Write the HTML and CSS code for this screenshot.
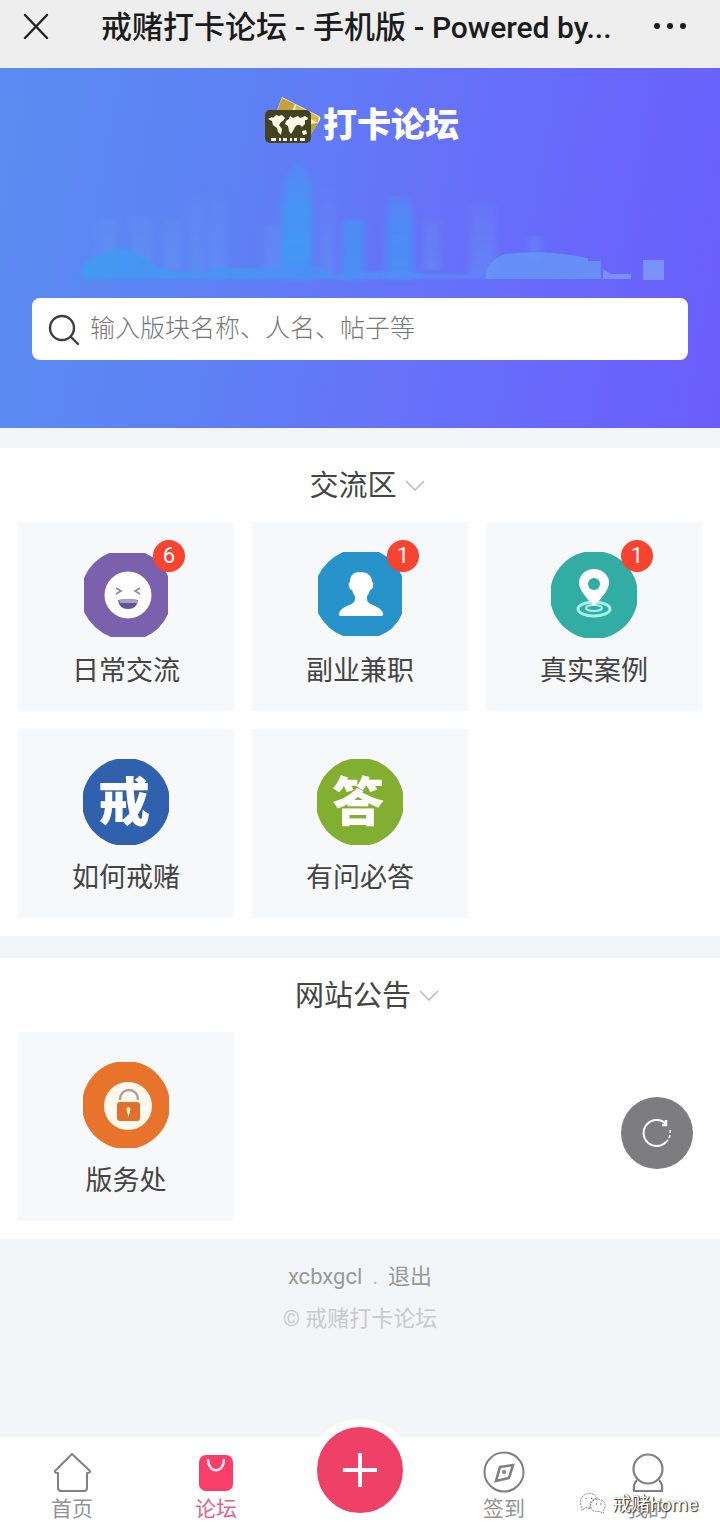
FILE: index.html
```html
<!DOCTYPE html>
<html lang="zh-CN">
<head>
<meta charset="utf-8">
<meta name="viewport" content="width=device-width, initial-scale=1">
<title>戒赌打卡论坛 - 手机版</title>
<link rel="stylesheet" href="styles.css">
</head>
<body>
<header class="topbar">
  <button class="icon-button" aria-label="关闭">
    <svg width="28" height="28" viewBox="0 0 28 28" fill="none" stroke="#222" stroke-width="2.4" stroke-linecap="round"><path d="M3 2 25 25M25 2 3 25"/></svg>
  </button>
  <h1 class="topbar-title">戒赌打卡论坛 - 手机版 - <span class="topbar-latin">Powered by...</span></h1>
  <button class="icon-button" aria-label="更多">
    <svg width="36" height="10" viewBox="0 0 36 10" fill="#1c1c1c"><circle cx="5" cy="4" r="3"/><circle cx="18" cy="4" r="3"/><circle cx="31" cy="4" r="3"/></svg>
  </button>
</header>

<main class="page">
  <section class="hero">
    <div class="brand">
      <svg width="56" height="48" viewBox="0 0 56 48">
        <path d="M17 1 54 20q2 1 1 4L44 41 8 25Z" fill="#f5efd0"/>
        <path d="M17 2 30 8 27 15 12 15Z" fill="#c3a43b"/>
        <path d="M31 9 54 21 53 27 30 14Z" fill="#d4b94e"/>
        <path d="M45 28 53 27 45 40Z" fill="#c3a43b"/>
        <rect x="0" y="14" width="46" height="33" rx="5" fill="#45431f"/>
        <g fill="#fffbe6">
          <path d="M3 23 7 21 8 22 11 19 14 20 17 19 20 22 18 25 16 26 14 29 17 33 16 39 13 36 12 32 8 29 7 25Z"/>
          <path d="M21 25 24 23 25 20 28 22 33 20 35 22 40 20 43 22 42 24 40 24 40 28 37 31 35 29 32 29 30 31 28 35 26 38 24 35 23 30 20 28Z"/>
          <path d="M37 35 41 34 42 38 38 39Z"/>
          <path d="M6 42h5v3H6zM14 42h2v3h-2zM18 42h4v3h-4zM25 42h2v3h-2zM29 42h3v3h-3zM35 42h5v3h-5z"/>
        </g>
      </svg>
      <span class="brand-name">打卡论坛</span>
    </div>
    <svg class="skyline" viewBox="0 0 720 142" aria-hidden="true">
      <defs>
        <linearGradient id="tower" x1="0" y1="0" x2="0" y2="1"><stop offset="0" stop-color="#4696f6" stop-opacity=".45"/><stop offset=".4" stop-color="#4495f5" stop-opacity=".95"/><stop offset="1" stop-color="#4495f5"/></linearGradient>
        <linearGradient id="pale" x1="0" y1="0" x2="0" y2="1"><stop offset="0" stop-color="#6d99f4" stop-opacity="0"/><stop offset="1" stop-color="#5f96f3" stop-opacity=".5"/></linearGradient>
        <linearGradient id="shore" x1="0" y1="0" x2="1" y2="0"><stop offset="0" stop-color="#4399f2"/><stop offset=".6" stop-color="#4d8ef7"/><stop offset="1" stop-color="#5c8bf8" stop-opacity=".6"/></linearGradient>
        <filter id="haze" x="-5%" y="-5%" width="110%" height="110%"><feGaussianBlur stdDeviation="3 1"/></filter>
      </defs>
      <g filter="url(#haze)">
        <path d="M98 76h20v50H98zM130 72h22v50h-22zM164 76h16v50h-16zM190 50h14v78h-14zM208 36h18v92h-18zM264 80h16v50h-16zM320 44h14v90h-14zM424 76h16v50h-16zM470 60h26v70h-26zM528 92h14v24h-14z" fill="url(#pale)"/>
        <path d="M281 64l5-30 8-14h8l8 14 2 24v78h-31z" fill="url(#tower)"/>
        <path d="M344 76h20v60h-22zM388 62l2-10h18l4 12 2 72h-28z" fill="url(#tower)" opacity=".75"/>
        <path d="M80 130q4-14 20-20l22-6 20 6 16 14 24 4h28v-4h60l44-2 20 8h18v-2h50l44 2h52v5H82Z" fill="url(#shore)"/>
      </g>
      <path d="M486 130q4-16 20-20 40-5 82 4v3h13v18H486Z" fill="#659bf3" opacity=".75"/>
      <path d="M603 125l8 5h20v5h-28zM643 116h21v20h-21z" fill="#7a91fa"/>
    </svg>
    <form class="search" role="search">
      <svg width="32" height="32" viewBox="0 0 32 32" fill="none" stroke="#3d3d3d" stroke-width="2.4" stroke-linecap="round"><circle cx="14" cy="14" r="12"/><path d="M23 23 30 30"/></svg>
      <input class="search-input" type="search" aria-label="搜索" placeholder="输入版块名称、人名、帖子等">
    </form>
  </section>

  <section class="block">
    <h2 class="block-title"><button class="block-toggle">交流区
      <svg width="20" height="12" viewBox="0 0 20 12" fill="none" stroke="#b5b5b5" stroke-width="1.3"><path d="M1 1 10 10 19 1"/></svg></button></h2>
    <div class="grid">
      <a class="card" href="#">
        <span class="card-icon">
          <svg class="card-svg" viewBox="0 0 86 86">
            <path d="M26 1H62Q78 8 85 24V62Q78 78 62 85H28Q10 78 1 60V26Q9 8 26 1Z" fill="#7a60ad"/>
            <circle cx="45" cy="43" r="23.500" fill="#fff"/>
            <path d="M33 36 38 39 33 42M57 36 52 39 57 42" fill="none" stroke="#8d86a3" stroke-width="1.600"/>
            <path d="M35 48q10-2 20 0-1 9-10 9t-10-9Z" fill="#66519b"/><path d="M36 48q9-2 18 0v3H37Z" fill="#aaa0cc"/>
          </svg>
          <span class="badge">6</span>
        </span>
        <span class="card-label">日常交流</span>
      </a>
      <a class="card" href="#">
        <span class="card-icon">
          <svg class="card-svg" viewBox="0 0 86 86">
            <path d="M26 0H62Q78 8 85 24V62Q78 78 62 84H26Q9 77 1 61V24Q9 8 26 0Z" fill="#2892cb"/>
            <path d="M43 20c-7 0-10 4-10 10q-2 0-1 4 0 3 3 4 1 4 3 6v3q0 4-6 6-8 3-10 8-1 3 2 3h40q3 0 2-3-2-5-10-8-6-2-6-6v-3q2-2 3-6 3-1 3-4 1-4-1-4c0-6-4-10-12-10Z" fill="#fff"/>
          </svg>
          <span class="badge">1</span>
        </span>
        <span class="card-label">副业兼职</span>
      </a>
      <a class="card" href="#">
        <span class="card-icon">
          <svg class="card-svg" viewBox="0 0 86 86">
            <circle cx="43" cy="43" r="44" fill="#31ada4"/>
            <ellipse cx="43" cy="57" rx="16" ry="7" fill="none" stroke="#a9f0eb" stroke-width="3"/>
            <ellipse cx="43" cy="56" rx="8" ry="3" fill="none" stroke="#a9f0eb" stroke-width="2"/>
            <path d="M43 54Q28 39 28 31a15 14 0 0 1 30 0q0 8-15 23Z" fill="#fff"/>
            <circle cx="43" cy="32" r="6" fill="#31ada4"/>
          </svg>
          <span class="badge">1</span>
        </span>
        <span class="card-label">真实案例</span>
      </a>
      <a class="card" href="#">
        <span class="card-icon">
          <svg class="card-svg" viewBox="0 0 86 86"><circle cx="43" cy="43" r="44" fill="#3061ae"/><text class="seal" x="41" y="62" text-anchor="middle">戒</text></svg>
        </span>
        <span class="card-label">如何戒赌</span>
      </a>
      <a class="card" href="#">
        <span class="card-icon">
          <svg class="card-svg" viewBox="0 0 86 86"><circle cx="43" cy="43" r="44" fill="#82af2f"/><text class="seal" x="41" y="62" text-anchor="middle">答</text></svg>
        </span>
        <span class="card-label">有问必答</span>
      </a>
    </div>
  </section>

  <section class="block">
    <h2 class="block-title"><button class="block-toggle">网站公告
      <svg width="20" height="12" viewBox="0 0 20 12" fill="none" stroke="#b5b5b5" stroke-width="1.3"><path d="M1 1 10 10 19 1"/></svg></button></h2>
    <div class="grid">
      <a class="card" href="#">
        <span class="card-icon">
          <svg class="card-svg" viewBox="0 0 86 86">
            <circle cx="43" cy="43" r="44" fill="#e8742b"/>
            <circle cx="45" cy="44" r="24" fill="#fff8ec"/>
            <path d="M37 38v-1a9 9 0 0 1 18 0v1" fill="none" stroke="#b0a092" stroke-width="2.400"/>
            <rect x="34" y="40" width="23" height="19" rx="3" fill="#e2702d"/>
            <path d="M45.500 45a2.500 2.500 0 0 1 1.500 4l-1.500 6-1.500-6a2.500 2.500 0 0 1 1.500-4Z" fill="#fff0d8"/>
          </svg>
        </span>
        <span class="card-label">版务处</span>
      </a>
    </div>
  </section>

  <button class="refresh" aria-label="刷新">
    <svg width="34" height="34" viewBox="0 0 34 34" fill="none" stroke="#fff" stroke-width="2"><path d="M26 8A13 13 0 1 0 26 26"/><path d="M26 4v5h-4" stroke-width="2.500"/><path d="M26 26a13 13 0 0 0 4-12" stroke-width="1.600" stroke-dasharray="3 2"/></svg>
  </button>

  <footer class="footer">
    <p class="footer-links"><a href="#">xcbxgcl</a><span class="footer-dot">.</span><a href="#">退出</a></p>
    <p class="copyright">© 戒赌打卡论坛</p>
  </footer>
</main>

<nav class="tabs">
  <a class="tab" href="#">
    <svg width="42" height="42" viewBox="0 0 42 42" fill="none" stroke="#808080" stroke-width="2" stroke-linejoin="round"><path d="M21 3 39 20q1 2-3 2v15q0 3-3 3H10q-3 0-3-3V22q-4 0-3-2Z"/></svg>
    首页
  </a>
  <a class="tab tab-active" href="#">
    <svg width="42" height="42" viewBox="0 0 42 42"><rect x="4" y="4" width="34" height="36" rx="7" fill="#f83e69"/><path d="M13 8c0 15 16 15 16 0" fill="none" stroke="#ffe6ec" stroke-width="2.400"/></svg>
    论坛
  </a>
  <div class="tab">
    <button class="publish" aria-label="发布">
      <svg width="40" height="40" viewBox="0 0 40 40" stroke="#fff" stroke-width="4"><path d="M3 20H37M20 3V37"/></svg>
    </button>
  </div>
  <a class="tab" href="#">
    <svg width="42" height="42" viewBox="0 0 42 42" fill="none" stroke="#808080" stroke-width="2"><circle cx="21" cy="21" r="19.500"/><path d="M17 16 30 14 26 27 13 30Z" stroke-width="2.600"/><circle cx="21" cy="21" r="2" fill="#808080" stroke="none"/></svg>
    签到
  </a>
  <a class="tab" href="#">
    <svg width="42" height="42" viewBox="0 0 42 42" fill="none" stroke="#808080" stroke-width="2.200"><path d="M10 29Q6 33 7 40H35Q36 33 32 29"/><circle cx="21" cy="18" r="14.500"/></svg>
    我的
  </a>
  <div class="watermark">
    <svg width="28" height="24" viewBox="0 0 30 24" fill="#fff" stroke="#777" stroke-width="1" stroke-dasharray="2 1"><path d="M3 17Q-1 8 6 3q8-4 14 4-10 1-8 11l-5-1-4 3Z"/><path d="M13 18q-2-8 6-10 9 0 9 7 0 3-2 5v3l-4-2q-7 1-9-3Z"/><path d="M7 7h1M13 7h1M18 13h1M23 13h1" stroke="#555" stroke-width="1.500"/></svg>
    <span>戒赌home</span>
  </div>
</nav>
</body>
</html>
```
FILE: styles.css
```css
* { box-sizing: border-box; }
body {
  margin: 0;
  min-height: 100vh;
  display: flex;
  flex-direction: column;
  background: #f4f5f8;
  color: #444;
  font-family: Roboto, "Noto Sans CJK SC", sans-serif;
}
button { border: 0; padding: 0; background: none; color: inherit; font: inherit; }
a { color: inherit; text-decoration: none; }
h1, h2, p { margin: 0; font-weight: 400; }
svg { display: block; flex: none; }

.topbar {
  display: flex;
  align-items: center;
  height: 68px;
  padding: 0 32px 14px 22px;
  background: #eee;
}
.icon-button { flex: none; }
.topbar-title {
  flex: 1;
  padding: 2px 44px 0 51px;
  overflow: hidden;
  white-space: nowrap;
  color: #1c1c1c;
  font-size: 31px;
  line-height: 40px;
  font-weight: 500;
}
.topbar-latin { font-size: 30px; }

.page { position: relative; flex: 1; }
.hero {
  padding: 28px 32px 68px;
  background: linear-gradient(100deg, #5a8df1 0%, #5d82f4 30%, #6671f9 60%, #6a5dfd 100%);
}
.brand { display: flex; justify-content: center; height: 56px; gap: 2px; padding-left: 4px; }
.brand-name { color: #fff; font-size: 34px; line-height: 58px; font-weight: 900; }
.skyline { width: calc(100% + 64px); margin: -8px -32px 12px; }
.search {
  display: flex;
  align-items: center;
  gap: 10px;
  height: 62px;
  padding: 2px 16px 0;
  border-radius: 8px;
  background: #fff;
}
.search-input {
  flex: 1;
  min-width: 0;
  height: 56px;
  padding: 0 0 4px;
  border: 0;
  outline: 0;
  background: none;
  color: #444;
  font: 300 25px Roboto, "Noto Sans CJK SC", sans-serif;
}
.search-input::placeholder { color: #777; }

.block { margin-top: 20px; padding: 18px 18px 18px; background: #fff; }
.block + .block { margin-top: 22px; }
.block-title { display: flex; justify-content: center; margin-bottom: 16px; }
.block-toggle {
  display: flex;
  align-items: center;
  gap: 8px;
  padding-left: 14px;
  font-size: 29px;
  line-height: 40px;
}
.grid { display: grid; grid-template-columns: repeat(3, 1fr); gap: 18px; }
.card {
  display: flex;
  flex-direction: column;
  align-items: center;
  gap: 12px;
  padding: 30px 0 19px;
  background: #f7f8f9;
}
.card-icon { position: relative; }
.card-svg { width: 86px; height: 86px; }
.card-label { font-size: 27px; line-height: 42px; }
.seal { fill: #fff; font: 900 52px "Noto Sans CJK SC", sans-serif; }
.badge {
  position: absolute;
  top: -12px;
  right: -16px;
  width: 32px;
  height: 32px;
  border-radius: 50%;
  background: #f8442f;
  color: #fff;
  font-size: 22px;
  line-height: 32px;
  text-align: center;
}
.refresh {
  position: absolute;
  right: 27px;
  bottom: 268px;
  display: grid;
  place-items: center;
  width: 72px;
  height: 72px;
  border-radius: 50%;
  background: #7d7d7f;
}
.footer { padding: 22px 0 88px; font-size: 22px; line-height: 32px; text-align: center; }
.footer-links { display: flex; justify-content: center; gap: 10px; margin-bottom: 10px; color: #999; }
.footer-dot { color: #bbb; }
.copyright { color: #c9cacc; }

.tabs {
  position: relative;
  display: grid;
  grid-template-columns: repeat(5, 1fr);
  height: 97px;
  background: #fff;
}
.tab {
  display: flex;
  flex-direction: column;
  align-items: center;
  padding-top: 14px;
  color: #939393;
  font-size: 21px;
  line-height: 32px;
}
.tab-active { color: #e0688a; }
.publish {
  display: grid;
  place-items: center;
  flex: none;
  width: 102px;
  height: 102px;
  margin-top: -32px;
  border: 8px solid #fff;
  border-radius: 50%;
  background: #ef4067;
}
.watermark {
  position: absolute;
  right: 22px;
  bottom: 18px;
  display: flex;
  align-items: center;
  gap: 5px;
  color: #fff;
  font: 19px Roboto, "Noto Sans CJK SC", sans-serif;
  text-shadow: 1px 1px 1px #333, 1px 0 1px #555;
}
```
